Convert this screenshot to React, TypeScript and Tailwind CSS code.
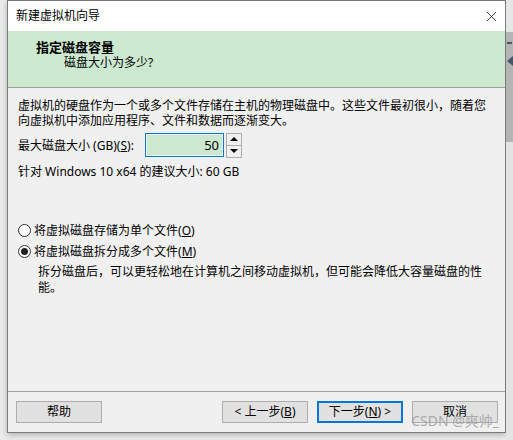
import { X } from 'lucide-react'

const FONT = { fontFamily: '"Noto Sans", "Noto Sans CJK SC", sans-serif' }

function Radio({ checked, label, hotkey }: { checked?: boolean; label: string; hotkey: string }) {
  return (
    <div className="flex items-center h-[20px] gap-[3px]">
      <span className="w-[13px] h-[13px] rounded-full border border-[#333] bg-white flex items-center justify-center">
        {checked && <span className="w-[7px] h-[7px] rounded-full bg-[#222]" />}
      </span>
      <span>
        {label}(<span className="underline">{hotkey}</span>)
      </span>
    </div>
  )
}

function Btn({ children, primary }: { children: React.ReactNode; primary?: boolean }) {
  return (
    <div
      className={
        'w-[86px] h-[22px] flex items-center justify-center bg-[#e1e1e1] ' +
        (primary ? 'border-2 border-[#0078d7]' : 'border border-[#adadad]')
      }
    >
      {children}
    </div>
  )
}

export default function App() {
  return (
    <div className="w-[513px] h-[440px] flex bg-[#ebebeb] text-[12px] text-black overflow-hidden" style={FONT}>
      <div className="w-[7px] shrink-0" />

      {/* wizard window */}
      <div className="w-[499px] h-[433px] shrink-0 border border-[#7a7a7a] flex flex-col shadow-[0_2px_6px_rgba(0,0,0,0.25)]">
        <div className="h-[30px] bg-white flex items-center justify-between pl-[8px] pr-[5px]">
          <span>新建虚拟机向导</span>
          <X className="w-[17px] h-[17px]" strokeWidth={1} />
        </div>

        <div className="h-[57px] bg-[#cce8cf] border-b border-[#9c9c9c] pl-[28px] pt-[8px] leading-[16px]">
          <div className="font-bold text-[13px]">指定磁盘容量</div>
          <div className="pl-[28px]">磁盘大小为多少?</div>
        </div>

        <div className="flex-1 bg-[#f0f0f0] flex flex-col relative">
          <div className="flex-1 px-[10px] pt-[10px] leading-[15px] whitespace-nowrap">
            <div>虚拟机的硬盘作为一个或多个文件存储在主机的物理磁盘中。这些文件最初很小，随着您</div>
            <div>向虚拟机中添加应用程序、文件和数据而逐渐变大。</div>

            <div className="flex items-center mt-[4px] h-[26px]">
              <span className="w-[127px]">
                最大磁盘大小 (GB)(<span className="underline">S</span>):
              </span>
              <div className="w-[79px] h-[24px] border border-[#0078d7] p-[1px]">
                <div className="h-full bg-[#cce8cf] flex items-center justify-end pr-[3px] text-[13px]">50</div>
              </div>
              <div className="ml-[2px] w-[16px] h-[25px] border border-[#adadad] bg-[#f0f0f0] flex flex-col">
                <div className="flex-1 flex items-center justify-center border-b border-[#adadad]">
                  <span className="w-0 h-0 border-l-[4px] border-r-[4px] border-b-[4px] border-l-transparent border-r-transparent border-b-black" />
                </div>
                <div className="flex-1 flex items-center justify-center">
                  <span className="w-0 h-0 border-l-[4px] border-r-[4px] border-t-[4px] border-l-transparent border-r-transparent border-t-black" />
                </div>
              </div>
            </div>

            <div className="mt-[6px]">针对 Windows 10 x64 的建议大小: 60 GB</div>

            <div className="mt-[41px] flex flex-col gap-[1px]">
              <Radio label="将虚拟磁盘存储为单个文件" hotkey="O" />
              <Radio checked label="将虚拟磁盘拆分成多个文件" hotkey="M" />
            </div>
            <div className="pl-[20px] pt-[3px] leading-[16px]">
              <div>拆分磁盘后，可以更轻松地在计算机之间移动虚拟机，但可能会降低大容量磁盘的性</div>
              <div>能。</div>
            </div>
          </div>

          <div className="h-[41px] border-t border-[#a0a0a0] flex items-start pt-[9px] pl-[8px] pr-[7px]">
            <Btn>帮助</Btn>
            <div className="flex-1" />
            <div className="flex gap-[9px]">
              <Btn>
                &lt; 上一步(<span className="underline">B</span>)
              </Btn>
              <Btn primary>
                下一步(<span className="underline">N</span>) &gt;
              </Btn>
              <Btn>取消</Btn>
            </div>
          </div>

          <span className="absolute right-[6px] bottom-[1px] text-[14px] text-[#9a9a9a]/80">CSDN @爽帅_</span>
        </div>
      </div>

      {/* background window edge */}
      <div className="flex-1 flex flex-col">
        <div className="h-[32px] bg-[#e6e6e6]" />
        <div className="h-[110px] bg-[#b4b4b4] flex flex-col items-center pt-[10px] gap-[12px]">
          <span className="w-[5px] h-[2px] bg-[#4b5563]" />
          <span className="w-0 h-0 border-t-[5px] border-b-[5px] border-r-[6px] border-t-transparent border-b-transparent border-r-[#475569]" />
        </div>
        <div className="flex-1 bg-[#e4e4e4]" />
      </div>
    </div>
  )
}
